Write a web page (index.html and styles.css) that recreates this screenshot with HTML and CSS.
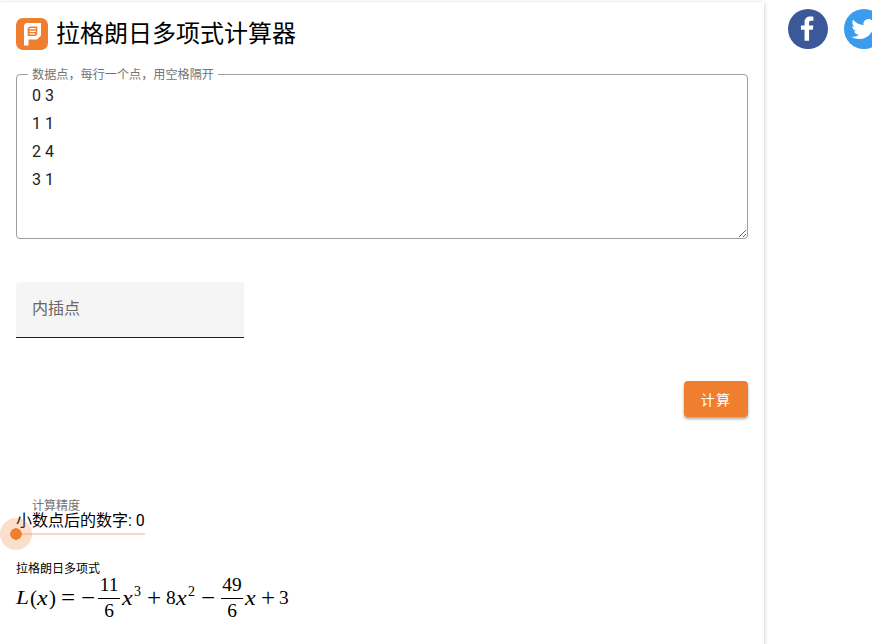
FILE: index.html
```html
<!DOCTYPE html>
<html lang="zh-CN">
<head>
<meta charset="utf-8">
<title>拉格朗日多项式计算器</title>
<link rel="stylesheet" href="styles.css">
</head>
<body>
<div class="page">
  <main class="card">
    <header class="header">
      <svg class="logo" viewBox="0 0 32 32" aria-hidden="true">
        <rect width="32" height="32" rx="7" fill="#f07e2f"/>
        <path fill="#fff" fill-rule="evenodd" d="M10 5H25V17.5L21 21.5H12.5V27.5H8V7ZM13.5 8.5L11.7 10.3V18H19.5L21.3 16.2V8.5Z"/>
        <path d="M13.5 10.7H19.7M13.5 13.3H19.7M13.5 15.9H19" stroke="#fff" stroke-width="1.3"/>
      </svg>
      <h1 class="title">拉格朗日多项式计算器</h1>
    </header>
    <fieldset class="outlined">
      <legend class="legend">数据点，每行一个点，用空格隔开</legend>
      <textarea class="points" spellcheck="false">0 3
1 1
2 4
3 1</textarea>
    </fieldset>
    <div class="filled">内插点</div>
    <div class="actions"><button class="button">计算</button></div>
    <section class="precision">
      <div class="precision-label">计算精度</div>
      <div class="precision-value">小数点后的数字: 0</div>
      <div class="slider"><span class="thumb"></span></div>
    </section>
    <section class="result">
      <div class="result-label">拉格朗日多项式</div>
      <div class="formula">
        <i class="fn">L</i><span class="paren">(</span><i class="arg">x</i><span class="paren close">)</span>
        <span class="op eq">=</span><span class="op neg">−</span>
        <span class="frac"><span>11</span><span>6</span></span><i class="var">x</i><sup class="pow">3</sup>
        <span class="op plus">+</span><span class="digit">8</span><i class="var">x</i><sup class="pow">2</sup>
        <span class="op minus">−</span>
        <span class="frac"><span>49</span><span>6</span></span><i class="var">x</i>
        <span class="op plus-end">+</span><span class="digit">3</span>
      </div>
    </section>
  </main>
  <aside class="share">
    <svg viewBox="0 0 64 64" width="40" height="40" aria-label="Facebook">
      <circle cx="32" cy="32" r="32" fill="#3b5998"/>
      <path fill="#fff" d="M34.1 47V33.3h4.6l.7-5.3h-5.3v-3.4c0-1.5.4-2.6 2.6-2.6h2.8v-4.8c-.5-.1-2.2-.2-4.1-.2-4.1 0-6.9 2.5-6.9 7V28H24v5.3h4.5V47z" transform="translate(31 31.5) scale(1.29) translate(-32 -32)"/>
    </svg>
    <svg viewBox="0 0 64 64" width="40" height="40" aria-label="Twitter">
      <circle cx="32" cy="32" r="32" fill="#3b9bec"/>
      <path fill="#fff" d="M48 22.1c-1.2.5-2.4.9-3.8 1 1.4-.8 2.4-2.1 2.9-3.6-1.3.8-2.7 1.3-4.2 1.6C41.7 19.8 40 19 38.2 19c-3.6 0-6.6 2.9-6.6 6.6 0 .5.1 1 .2 1.5-5.5-.3-10.3-2.9-13.5-6.9-.6 1-.9 2.1-.9 3.3 0 2.3 1.2 4.3 2.9 5.5-1.1 0-2.1-.3-3-.8v.1c0 3.2 2.3 5.8 5.3 6.4-.6.1-1.1.2-1.7.2-.4 0-.8 0-1.2-.1.8 2.6 3.3 4.5 6.1 4.6-2.2 1.8-5.1 2.8-8.2 2.8-.5 0-1.1 0-1.6-.1 2.9 1.9 6.4 2.9 10.1 2.9 12.1 0 18.7-10 18.7-18.7v-.8c1.3-.9 2.4-2.1 3.2-3.4z" transform="translate(31.5 32) scale(1.24) translate(-32 -32)"/>
    </svg>
  </aside>
</div>
</body>
</html>
```
FILE: styles.css
```css
* {
  box-sizing: border-box;
}

body {
  margin: 0;
  height: 644px;
  overflow: hidden;
  background: #fff;
  color: #000;
  font-family: Roboto, "Noto Sans CJK SC", sans-serif;
}

.page {
  display: flex;
  align-items: flex-start;
  padding-top: 2px;
}

.card {
  flex: 0 0 764px;
  height: 660px;
  padding: 12px 16px;
  background: #fff;
  box-shadow: 0 1px 4px rgba(0, 0, 0, 0.25);
}

.header {
  display: flex;
  align-items: center;
  gap: 8px;
  height: 40px;
}

.logo {
  width: 32px;
  height: 32px;
}

.title {
  margin: 0;
  font-size: 24px;
  font-weight: 400;
  line-height: 36px;
}

.outlined {
  height: 173px;
  margin: 12px 0 0;
  padding: 0;
  min-width: 0;
  border: 1px solid #9e9e9e;
  border-radius: 4px;
}

.legend {
  height: 16px;
  margin-left: 11px;
  padding: 0 4px;
  color: #737373;
  font-size: 12.13px;
  line-height: 18px;
}

.points {
  display: block;
  width: 100%;
  height: 156px;
  padding: 0 15px;
  border: 0;
  outline: 0;
  resize: vertical;
  overflow: hidden;
  background: transparent;
  color: #212121;
  font: 16px/28px Roboto, sans-serif;
}

.filled {
  width: 228px;
  height: 56px;
  margin-top: 43px;
  padding-left: 16px;
  border-bottom: 1px solid #212121;
  border-radius: 4px 4px 0 0;
  background: #f5f5f5;
  color: #666;
  font-size: 16px;
  line-height: 54px;
}

.actions {
  display: flex;
  justify-content: flex-end;
  margin-top: 43px;
}

.button {
  width: 64px;
  height: 36px;
  padding: 2px 0 0;
  border: 0;
  border-radius: 4px;
  background: #f07e2f;
  box-shadow: 0 2px 3px rgba(0, 0, 0, 0.35);
  color: #fff;
  font: 14px/34px Roboto, "Noto Sans CJK SC", sans-serif;
  letter-spacing: 1.2px;
}

.precision {
  width: 129px;
  margin-top: 81px;
}

.precision-label {
  height: 14px;
  padding-left: 16px;
  color: #737373;
  font-size: 12px;
  line-height: 16px;
}

.precision-value {
  height: 21px;
  font-size: 16px;
  line-height: 18px;
  white-space: nowrap;
}

.slider {
  position: relative;
  height: 2px;
  background: #fcd8c1;
}

.thumb {
  position: absolute;
  top: -15px;
  left: -16px;
  width: 32px;
  height: 32px;
  border-radius: 50%;
  background: radial-gradient(circle, #f07e2f 5.5px, rgba(240, 126, 47, 0.25) 6px);
}

.result {
  margin-top: 24px;
}

.result-label {
  height: 17px;
  font-size: 12px;
  line-height: 20px;
}

.formula {
  display: flex;
  align-items: center;
  height: 44px;
  font: 19.4px/24px "Liberation Serif", serif;
}

.fn {
  width: 13px;
  transform: scaleX(1.2);
  transform-origin: left;
}

.arg,
.var {
  flex: none;
  width: 12px;
  font-size: 20px;
  transform: scaleX(1.2);
  transform-origin: left;
}

.paren {
  width: 7px;
  margin-left: 1px;
  font-size: 21px;
}

.close {
  width: 11px;
  margin-left: 0;
}

.op {
  flex: none;
  width: 14px;
  font-size: 25px;
}

.eq {
  width: 20px;
  margin-left: 1px;
}

.neg {
  width: 17px;
}

.frac {
  display: grid;
  flex: none;
  grid-template-rows: 22px 22px;
  width: 22px;
  margin-right: 2px;
  background: linear-gradient(#000, #000) 0 22px / 100% 1px no-repeat;
  line-height: 18px;
  text-align: center;
}

.frac span:last-child {
  padding-top: 3px;
  line-height: 20px;
}

.pow {
  width: 8px;
  margin-bottom: 12px;
  font-size: 14px;
  line-height: 14px;
}

.plus {
  width: 19px;
  margin-left: 5px;
}

.digit {
  width: 10px;
}

.minus {
  width: 20px;
  margin-left: 5px;
}

.plus-end {
  width: 18px;
  margin-left: 4px;
}

.share {
  display: flex;
  flex: none;
  gap: 16px;
  margin: 7px 0 0 24px;
}
```
